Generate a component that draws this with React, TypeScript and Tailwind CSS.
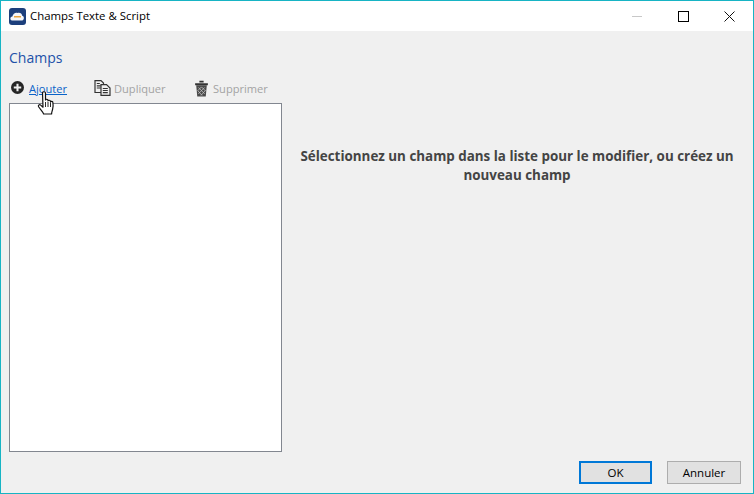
import React from "react";

function AppIcon() {
  return (
    <svg width="17" height="17" viewBox="0 0 17 17">
      <rect x="0" y="0" width="17" height="17" rx="3" fill="#1c3f7c" />
      <path d="M3 12.500c-2.400-.6-2-3.800.4-4C4 5.400 6.800 4 8.600 5c2-.8 4.400.4 4.600 2.800 2.200.4 2.200 4.200.2 4.700z" fill="#f4f6fa" />
      <rect x="5" y="8" width="7" height="1.500" fill="#e8a33d" />
    </svg>
  );
}

function AddIcon() {
  return (
    <svg width="13" height="13" viewBox="0 0 14 14" className="-mt-[2px]">
      <circle cx="7" cy="7" r="7" fill="#262626" />
      <path d="M7 3v8M3 7h8" stroke="#f0f0f0" strokeWidth="2.200" />
    </svg>
  );
}

function DuplicateIcon() {
  return (
    <svg width="17" height="16" viewBox="0 0 17 16" fill="none" stroke="#333333" strokeWidth="1.200" className="-mt-[2px]">
      <path d="M1 .6h6l2.500 2.500v9.400h-8.500z" fill="#f0f0f0" />
      <path d="M2.800 3.500h3M2.800 5.800h4M2.800 8h4" />
      <path d="M7 4.600h5.500l3.500 3.500v7.300h-9z" fill="#f0f0f0" />
      <path d="M8.800 8.500h5M8.800 10.500h5M8.800 12.700h5" />
    </svg>
  );
}

function TrashIcon() {
  return (
    <svg width="15" height="17" viewBox="0 0 14 16" className="-mt-[1px]">
      <path d="M5 1.500h4M1 4h12" stroke="#333" strokeWidth="1.800" fill="none" />
      <path d="M2 5h10l-1 10.500h-8z" fill="#4a4a4a" />
      <path d="M4 7l6 6M7 6.500l4 4M3.500 10l4 4.500M10 7l-6 6M7 6.500l-3.500 3.500M10.500 10l-4 4.500" stroke="#c8c8c8" strokeWidth=".7" fill="none" />
    </svg>
  );
}

function HandCursor() {
  return (
    <svg width="19" height="25" viewBox="0 0 19 25" className="absolute left-[36px] top-[90px]">
      <path
        d="M5.500 2c0-1.700 3-1.700 3 0v7c.3-1 2.400-1 2.500.2v.8c.2-1 2.400-1 2.500.2v.8c.3-.9 2.300-.8 2.400.4 .2 1.200.3 4.500-.3 7-.4 1.700-1 2.600-1 4.600h-8c-.6-2.200-3.200-4.400-5-7.200-.9-1.700.9-2.700 2.100-1.700l2.300 2.100z"
        fill="#ffffff"
        stroke="#111111"
        strokeWidth="1.200"
        strokeLinejoin="round"
      />
      <path d="M8.500 11v5M11 11v5M13.500 11.500v4.500" stroke="#111111" strokeWidth=".9" fill="none" />
    </svg>
  );
}

export default function App() {
  return (
    <div className="relative flex h-[494px] w-[754px] flex-col border border-[#17b4c4] bg-[#f0f0f0] font-['Open_Sans','Noto_Sans',sans-serif]">
      {/* Title bar */}
      <div className="flex h-[30px] items-center bg-white pl-[8px]">
        <AppIcon />
        <span className="ml-[4px] text-[11.400px] text-black">Champs Texte &amp; Script</span>
        <div className="ml-auto flex h-full items-center pr-px">
          <div className="flex w-[46px] justify-center">
            <div className="h-px w-[10px] bg-[#c8c8c8]" />
          </div>
          <div className="flex w-[46px] justify-center">
            <div className="h-[11px] w-[11px] border border-black" />
          </div>
          <div className="flex w-[46px] justify-center">
            <svg width="11" height="11" viewBox="0 0 11 11" stroke="#111" strokeWidth="1">
              <path d="M.5.500l10 10M10.500.500l-10 10" />
            </svg>
          </div>
        </div>
      </div>

      {/* Body */}
      <div className="flex min-h-0 flex-1 flex-col pl-[8px] pr-[12px] pt-[16px]">
        <h1 className="text-[14px] leading-[22px] text-[#2150a8]">Champs</h1>

        <div className="mb-[4px] mt-[10px] flex h-[20px] items-center text-[11.100px]">
          <div className="flex w-[85px] items-center pl-[2px]">
            <AddIcon />
            <span className="ml-[5px] text-[#0a63c8] underline">Ajouter</span>
          </div>
          <div className="flex w-[100px] items-center">
            <DuplicateIcon />
            <span className="ml-[3px] text-[#a3a3a3]">Dupliquer</span>
          </div>
          <div className="flex items-center">
            <TrashIcon />
            <span className="ml-[4px] text-[#a3a3a3]">Supprimer</span>
          </div>
        </div>

        <div className="flex min-h-0 flex-1">
          <div className="h-[349px] w-[273px] border border-[#828790] bg-white" />
          <div className="flex-1 pl-[11px] pt-[44px] text-center text-[13.400px] leading-[19px] font-bold text-[#444444]">
            Sélectionnez un champ dans la liste pour le modifier, ou créez un nouveau champ
          </div>
        </div>

        <div className="flex h-[32px] justify-end gap-[15px]">
          <button className="h-[23px] w-[73px] border-2 border-[#0078d7] bg-[#e1e1e1] text-[11.500px] text-black">OK</button>
          <button className="h-[23px] w-[74px] border border-[#adadad] bg-[#e1e1e1] text-[11.500px] text-black">Annuler</button>
        </div>
      </div>

      <HandCursor />
    </div>
  );
}
